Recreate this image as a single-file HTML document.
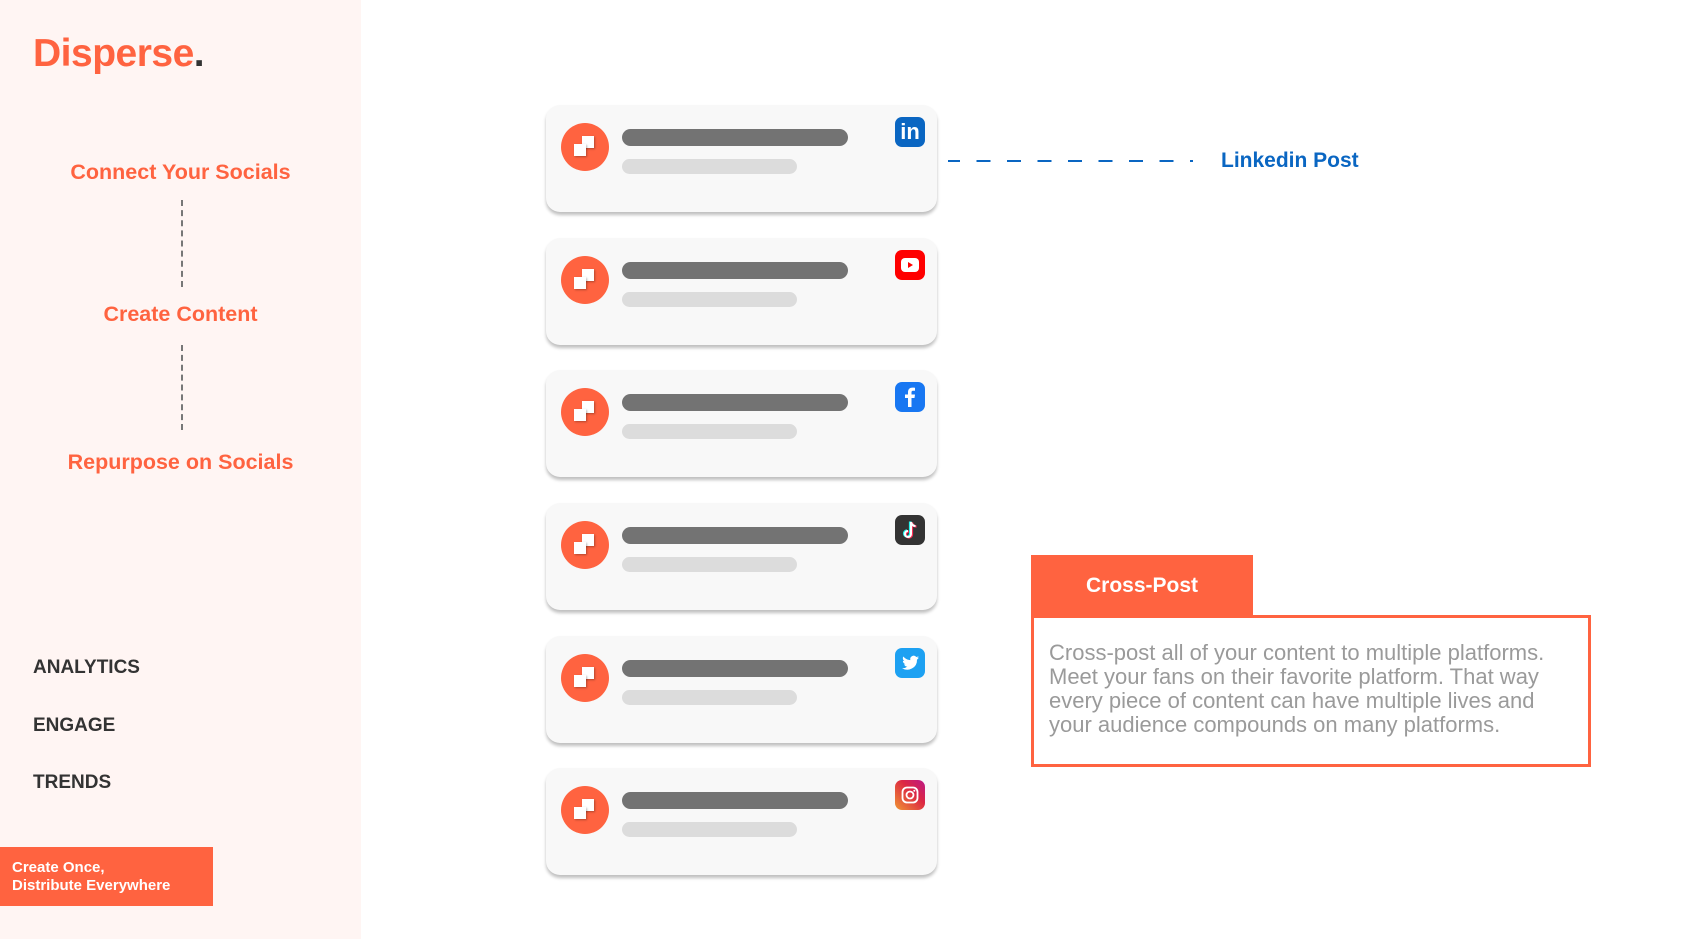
<!DOCTYPE html>
<html><head><meta charset="utf-8"><style>
*{margin:0;padding:0;box-sizing:border-box}
body{width:1707px;height:939px;background:#fff;font-family:"Liberation Sans",sans-serif;position:relative;overflow:hidden}
.a{position:absolute}
.side{left:0;top:0;width:361px;height:939px;background:#fff5f3}
.logo{left:33px;top:32px;font-size:39px;font-weight:bold;color:#ff6340;letter-spacing:-0.5px}
.logo span{color:#333}
.nav{width:361px;text-align:center;font-size:21.5px;font-weight:bold;color:#ff6340}
.vd{left:181px;width:0;border-left:2px dashed #777}
.menu{left:33px;font-size:19px;font-weight:bold;color:#333}
.btn{left:0;top:851px;width:213px;height:59px;background:#ff6340;color:#fff;font-size:15px;font-weight:bold;padding:12px 0 0 12px;line-height:18px}
.card{left:546px;width:391px;height:107px;background:#f8f8f8;border-radius:14px;box-shadow:0 3px 3px rgba(0,0,0,.25)}
.circ{left:15px;top:18px;width:48px;height:48px;border-radius:50%;background:#ff6340}
.b1{left:76px;top:24px;width:226px;height:17px;border-radius:9px;background:#737373}
.b2{left:76px;top:54px;width:175px;height:15px;border-radius:8px;background:#dcdcdc}
.ic{left:349px;top:12px;width:30px;height:30px;border-radius:7px}
.sq{background:#fff;box-shadow:1px 1px 2px rgba(0,0,0,.3)}
</style></head><body>
<div class="a side"></div>
<div class="a logo">Disperse<span>.</span></div>
<div class="a nav" style="top:160px">Connect Your Socials</div>
<div class="a vd" style="top:200px;height:87px"></div>
<div class="a nav" style="top:302px">Create Content</div>
<div class="a vd" style="top:345px;height:85px"></div>
<div class="a nav" style="top:450px">Repurpose on Socials</div>
<div class="a menu" style="top:657px">ANALYTICS</div>
<div class="a menu" style="top:715px">ENGAGE</div>
<div class="a menu" style="top:772px">TRENDS</div>
<div class="a btn" style="top:847px">Create Once,<br>Distribute Everywhere</div>

<div class="a card" style="top:105px"><div class="a circ"><div class="a sq" style="left:21px;top:13px;width:12px;height:12px"></div><div class="a sq" style="left:13px;top:21px;width:12px;height:12px"></div></div><div class="a b1"></div><div class="a b2"></div>
<div class="a ic" style="background:#0a66c2;color:#fff;font-weight:bold;font-size:22px;text-align:center;line-height:30px">in</div></div>

<div class="a card" style="top:238px"><div class="a circ"><div class="a sq" style="left:21px;top:13px;width:12px;height:12px"></div><div class="a sq" style="left:13px;top:21px;width:12px;height:12px"></div></div><div class="a b1"></div><div class="a b2"></div>
<div class="a ic" style="background:#f00"><svg width="30" height="30"><rect x="6" y="8" width="18" height="14" rx="4" fill="#fff"/><path d="M13 12l5 3-5 3z" fill="#f00"/></svg></div></div>

<div class="a card" style="top:370px"><div class="a circ"><div class="a sq" style="left:21px;top:13px;width:12px;height:12px"></div><div class="a sq" style="left:13px;top:21px;width:12px;height:12px"></div></div><div class="a b1"></div><div class="a b2"></div>
<div class="a ic" style="background:#1877f2"><svg width="30" height="30"><path d="M16.5 25V16h3l.5-3.5h-3.5v-2c0-1 .3-1.7 1.8-1.7H20V5.7c-.4 0-1.4-.1-2.6-.1-2.6 0-4.4 1.6-4.4 4.5v2.4h-3V16h3v9z" fill="#fff"/></svg></div></div>

<div class="a card" style="top:503px"><div class="a circ"><div class="a sq" style="left:21px;top:13px;width:12px;height:12px"></div><div class="a sq" style="left:13px;top:21px;width:12px;height:12px"></div></div><div class="a b1"></div><div class="a b2"></div>
<div class="a ic" style="background:#333"><svg width="30" height="30"><path d="M16 7v12a3 3 0 1 1-3-3M16 7c.5 2.5 2 4 4.5 4" fill="none" stroke="#25f4ee" stroke-width="2.2" transform="translate(-1,-.5)"/><path d="M16 7v12a3 3 0 1 1-3-3M16 7c.5 2.5 2 4 4.5 4" fill="none" stroke="#fe2c55" stroke-width="2.2" transform="translate(1,.5)"/><path d="M16 7v12a3 3 0 1 1-3-3M16 7c.5 2.5 2 4 4.5 4" fill="none" stroke="#fff" stroke-width="2"/></svg></div></div>

<div class="a card" style="top:636px"><div class="a circ"><div class="a sq" style="left:21px;top:13px;width:12px;height:12px"></div><div class="a sq" style="left:13px;top:21px;width:12px;height:12px"></div></div><div class="a b1"></div><div class="a b2"></div>
<div class="a ic" style="background:#1da1f2"><svg width="30" height="30"><path d="M24 9.5c-.6.3-1.3.5-2 .6.7-.4 1.3-1.1 1.5-1.9-.7.4-1.4.7-2.2.8a3.4 3.4 0 0 0-5.9 3.1c-2.9-.1-5.4-1.5-7.1-3.6-.9 1.6-.4 3.6 1.1 4.6-.6 0-1.1-.2-1.5-.4 0 1.7 1.2 3.1 2.7 3.4-.5.1-1 .2-1.5.1.4 1.4 1.7 2.4 3.2 2.4A6.9 6.9 0 0 1 7 20.1 9.7 9.7 0 0 0 22 11.6c.7-.5 1.3-1.1 2-2.1z" fill="#fff"/></svg></div></div>

<div class="a card" style="top:768px"><div class="a circ"><div class="a sq" style="left:21px;top:13px;width:12px;height:12px"></div><div class="a sq" style="left:13px;top:21px;width:12px;height:12px"></div></div><div class="a b1"></div><div class="a b2"></div>
<div class="a ic" style="background:linear-gradient(45deg,#f09433,#dc2743 60%,#bc1888)"><svg width="30" height="30"><rect x="7.5" y="7.5" width="15" height="15" rx="4.5" fill="none" stroke="#fff" stroke-width="1.8"/><circle cx="15" cy="15" r="3.5" fill="none" stroke="#fff" stroke-width="1.8"/><circle cx="19.3" cy="10.7" r="1" fill="#fff"/></svg></div></div>

<div class="a" style="left:948px;top:160px;width:245px;border-top:2px dashed #0a66c2;border-image:repeating-linear-gradient(90deg,#0a66c2 0 14px,transparent 14px 30px) 2"></div>
<div class="a" style="left:1221px;top:149px;font-size:21px;font-weight:bold;color:#0a66c2">Linkedin Post</div>

<div class="a" style="left:1031px;top:555px;width:222px;height:62px;background:#ff6340;color:#fff;font-size:21px;font-weight:bold;text-align:center;line-height:62px">Cross-Post</div>
<div class="a" style="left:1031px;top:615px;width:560px;height:152px;border:3px solid #ff6340"></div>
<div class="a" style="left:1049px;top:641px;width:520px;font-size:22px;line-height:24px;color:#9a9a9a">Cross-post all of your content to multiple platforms. Meet your fans on their favorite platform. That way every piece of content can have multiple lives and your audience compounds on many platforms.</div>
</body></html>
